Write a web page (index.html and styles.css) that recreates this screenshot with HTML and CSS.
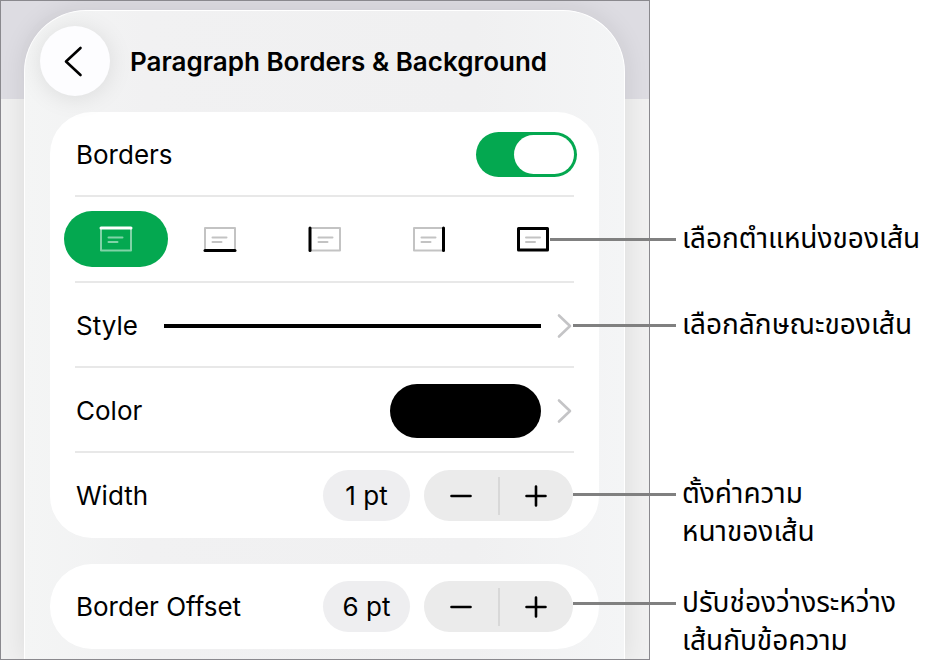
FILE: index.html
```html
<!DOCTYPE html>
<html lang="th">
<head>
    <meta charset="UTF-8">
    <meta name="viewport" content="width=device-width, initial-scale=1.0">
    <title>Paragraph Borders &amp; Background</title>
    <link rel="stylesheet" href="styles.css">
</head>
<body>
    <div class="figure">
        <main class="device" lang="en">
            <section class="sheet">
                <header class="sheet-header">
                    <button type="button" class="back-btn" aria-label="Back">
                        <svg width="20" height="32" viewBox="0 0 20 32"><path d="M17.500 3 L3 16.500 L17.500 30"/></svg>
                    </button>
                    <h1>Paragraph Borders &amp; Background</h1>
                </header>

                <div class="card">
                    <div class="row">
                        <label for="borders">Borders</label>
                        <input type="checkbox" role="switch" class="toggle" id="borders" checked>
                    </div>
                    <div class="row row-positions">
                        <div class="positions">
                            <button type="button" class="position selected" aria-label="Top border" aria-pressed="true">
                                <svg width="34" height="28" viewBox="0 0 34 28">
                                    <path class="box" d="M2 3H32V25.500H2Z"/>
                                    <path class="lines" d="M9.500 12.500H23.500M9.500 17H18.500"/>
                                    <path class="edge" d="M2 3H32"/>
                                </svg>
                            </button>
                            <button type="button" class="position" aria-label="Bottom border">
                                <svg width="34" height="28" viewBox="0 0 34 28">
                                    <path class="box" d="M2 3H32V25.500H2Z"/>
                                    <path class="lines" d="M9.500 12.500H23.500M9.500 17H18.500"/>
                                    <path class="edge" d="M2 25.500H32"/>
                                </svg>
                            </button>
                            <button type="button" class="position" aria-label="Left border">
                                <svg width="34" height="28" viewBox="0 0 34 28">
                                    <path class="box" d="M2 3H32V25.500H2Z"/>
                                    <path class="lines" d="M10.500 12.500H24.500M10.500 17H19.500"/>
                                    <path class="edge" d="M2 3V25.500"/>
                                </svg>
                            </button>
                            <button type="button" class="position" aria-label="Right border">
                                <svg width="34" height="28" viewBox="0 0 34 28">
                                    <path class="box" d="M2 3H32V25.500H2Z"/>
                                    <path class="lines" d="M9.500 12.500H23.500M9.500 17H18.500"/>
                                    <path class="edge" d="M31.500 3V25.500"/>
                                </svg>
                            </button>
                            <button type="button" class="position" aria-label="All borders">
                                <svg width="34" height="28" viewBox="0 0 34 28">
                                    <path class="lines" d="M10 12.500H24M10 17H19"/>
                                    <path class="edge" d="M2.500 3.500H31.500V25H2.500Z"/>
                                </svg>
                            </button>
                        </div>
                    </div>
                    <button type="button" class="row">
                        <span>Style</span>
                        <span class="line-sample"></span>
                        <svg class="chevron" width="17" height="26" viewBox="0 0 17 26"><path d="M3 2.500 L14 13 L3 23.500"/></svg>
                    </button>
                    <button type="button" class="row">
                        <span>Color</span>
                        <span class="swatch"></span>
                        <svg class="chevron" width="17" height="26" viewBox="0 0 17 26"><path d="M3 2.500 L14 13 L3 23.500"/></svg>
                    </button>
                    <div class="row">
                        <span>Width</span>
                        <button type="button" class="value">1 pt</button>
                        <div class="stepper">
                            <button type="button" aria-label="Decrease width">
                                <svg width="24" height="24" viewBox="0 0 24 24"><path d="M2.500 12H21.500"/></svg>
                            </button>
                            <button type="button" aria-label="Increase width">
                                <svg width="24" height="24" viewBox="0 0 24 24"><path d="M2.500 12H21.500M12 2.500V21.500"/></svg>
                            </button>
                        </div>
                    </div>
                </div>

                <div class="card">
                    <div class="row">
                        <span>Border Offset</span>
                        <button type="button" class="value">6 pt</button>
                        <div class="stepper">
                            <button type="button" aria-label="Decrease border offset">
                                <svg width="24" height="24" viewBox="0 0 24 24"><path d="M2.500 12H21.500"/></svg>
                            </button>
                            <button type="button" aria-label="Increase border offset">
                                <svg width="24" height="24" viewBox="0 0 24 24"><path d="M2.500 12H21.500M12 2.500V21.500"/></svg>
                            </button>
                        </div>
                    </div>
                </div>
            </section>
        </main>

        <aside class="notes">
            <p class="note note-position">เลือกตำแหน่งของเส้น</p>
            <p class="note note-style">เลือกลักษณะของเส้น</p>
            <p class="note note-width">ตั้งค่าความ<br>หนาของเส้น</p>
            <p class="note note-offset">ปรับช่องว่างระหว่าง<br>เส้นกับข้อความ</p>
        </aside>
    </div>
</body>
</html>
```
FILE: styles.css
```css
* {
    box-sizing: border-box;
}
body {
    margin: 0;
    background: #fff;
    color: #000;
    font-family: Inter, "Noto Sans Thai", "Noto Sans", sans-serif;
    font-size: 26px;
}
button {
    margin: 0;
    padding: 0;
    border: none;
    background: none;
    color: inherit;
    font: inherit;
    cursor: pointer;
}
svg {
    display: block;
    flex: none;
    fill: none;
    stroke: currentColor;
    stroke-linecap: round;
    stroke-linejoin: round;
}
.figure {
    display: flex;
    align-items: flex-start;
}

/* Device screen */
.device {
    flex: 1;
    min-width: 0;
    border: 1px solid #8a898e;
    padding: 9px 24px 0 23px;
    overflow: hidden;
    background: linear-gradient(#dddce2 98px, #f0f0f0 98px);
}
.sheet {
    padding: 15px 25px 10px;
    border: 1px solid #fff;
    border-bottom: none;
    border-radius: 62px 62px 0 0;
    background: linear-gradient(to right, #f4f5f5, #f1f1f2 20%, #f0f0f1 75%, #f4f5f6);
    box-shadow: 0 0 26px rgba(0, 0, 0, 0.09);
}
.sheet-header {
    display: flex;
    align-items: center;
    gap: 20px;
    margin: 0 0 16px -10px;
}
.sheet-header h1 {
    margin: 0;
    font-size: 26px;
    font-weight: 600;
    white-space: nowrap;
}
.back-btn {
    display: flex;
    flex: none;
    align-items: center;
    justify-content: center;
    width: 70px;
    height: 70px;
    border-radius: 50%;
    background: #fdfdff;
    box-shadow: 0 2px 24px rgba(0, 0, 0, 0.1);
}
.back-btn svg {
    margin-right: 4px;
    stroke-width: 2.6;
}

/* Cards and rows */
.card {
    padding: 0 25px;
    border-radius: 42px;
    background: #fff;
}
.card + .card {
    margin-top: 26px;
}
.row {
    display: flex;
    align-items: center;
    width: 100%;
    height: 85px;
    padding: 2px 1px 0;
    border-bottom: 2px solid #e8e8e8;
    text-align: left;
}
.row-positions {
    height: 86px;
    padding-top: 0;
}
.row:last-child {
    padding-top: 0;
    border-bottom: none;
}
.row > :first-child {
    flex: none;
}
.toggle {
    appearance: none;
    display: flex;
    justify-content: flex-end;
    width: 101px;
    height: 45px;
    margin: 0 -4px 0 auto;
    padding: 3px;
    border-radius: 23px;
    background: #04a850;
    cursor: pointer;
}
.toggle::before {
    content: "";
    width: 60px;
    border-radius: 20px;
    background: #fff;
}
.toggle:not(:checked) {
    justify-content: flex-start;
    background: #d5d5d8;
}
.row .positions {
    display: flex;
    flex: 1;
    margin: 0 -12px;
}
.position {
    display: flex;
    flex: 1;
    align-items: center;
    justify-content: center;
    height: 56px;
    border-radius: 28px;
}
.position .box {
    stroke: #c3c3c3;
    stroke-width: 2;
}
.position .lines {
    stroke: #c3c3c3;
    stroke-width: 2;
}
.position .edge {
    stroke-width: 3;
}
.position.selected {
    background: #04a850;
    color: #fff;
}
.position.selected .box,
.position.selected .lines {
    stroke: #80d3a7;
}
.line-sample {
    flex: 1;
    height: 4px;
    margin-left: 26px;
    background: #000;
}
.swatch {
    width: 151px;
    height: 54px;
    margin-left: auto;
    border-radius: 27px;
    background: #000;
}
.chevron {
    margin-left: 15px;
    color: #c4c4c6;
    stroke-width: 2.6;
}
.value {
    width: 87px;
    height: 51px;
    margin-left: auto;
    border-radius: 26px;
    background: #eeeef0;
    text-align: center;
}
.stepper {
    display: flex;
    align-items: center;
    width: 149px;
    height: 51px;
    margin-left: 14px;
    border-radius: 26px;
    background: #ebebeb;
}
.stepper button {
    display: flex;
    flex: 1;
    align-items: center;
    justify-content: center;
    height: 38px;
    stroke-width: 2.6;
}
.stepper button + button {
    border-left: 2px solid #d8d8d8;
}

/* Notes beside the device */
.notes {
    flex: none;
    width: 287px;
    padding: 219px 0 0 32px;
    font-size: 28px;
}
.note {
    position: relative;
    margin: 0;
    line-height: 38px;
    white-space: nowrap;
}
.note::before {
    content: "";
    position: absolute;
    top: 19px;
    right: 100%;
    width: 103px;
    height: 3px;
    margin-right: 6px;
    background: #808080;
}
.note-position::before {
    width: 126px;
}
.note-style {
    margin-top: 48px;
}
.note-width {
    margin-top: 131px;
}
.note-offset {
    margin-top: 33px;
}
```
